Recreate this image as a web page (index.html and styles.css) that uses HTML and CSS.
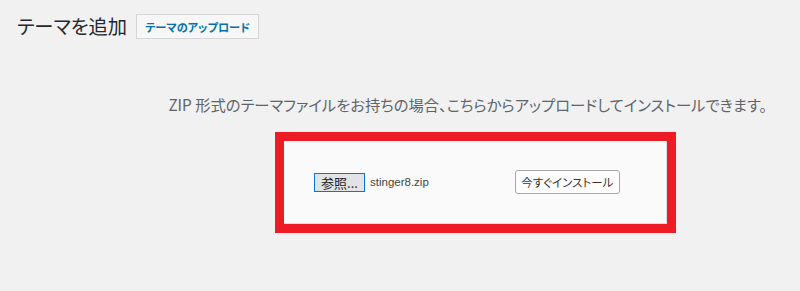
FILE: index.html
```html
<!DOCTYPE html>
<html lang="ja">
<head>
<meta charset="utf-8">
<link rel="stylesheet" href="styles.css">
</head>
<body>
<div class="wrap">
  <div class="title-row">
    <h1 class="title">テーマを追加</h1>
    <span class="title-action">テーマのアップロード</span>
  </div>
  <p class="install-help">ZIP 形式のテーマファイルをお持ちの場合、こちらからアップロードしてインストールできます。</p>
  <div class="highlight">
    <div class="upload-form">
      <span class="browse">参照...</span>
      <span class="file-name">stinger8.zip</span>
      <span class="install-btn">今すぐインストール</span>
    </div>
  </div>
</div>
</body>
</html>
```
FILE: styles.css
```css
html, body {
  margin: 0;
  padding: 0;
  background: #f1f1f1;
}
body {
  width: 800px;
  height: 291px;
  overflow: hidden;
  font-family: "Noto Sans CJK JP", "Noto Sans", sans-serif;
  font-feature-settings: "palt";
}
.wrap {
  padding: 14px 0 0 17px;
}
.title-row {
  display: flex;
  align-items: center;
  gap: 9px;
  height: 25px;
}
.title {
  margin: 0;
  font-size: 19.3px;
  font-weight: 400;
  color: #23282d;
  line-height: 25px;
}
.title-action {
  display: inline-flex;
  align-items: center;
  box-sizing: border-box;
  height: 25px;
  padding: 0 8px;
  border: 1px solid #d5d5d5;
  background: #f7f7f7;
  color: #0073aa;
  font-size: 11.2px;
  font-weight: 700;
}
.install-help {
  margin: 55px 0 0 0;
  padding-right: 33px;
  text-align: right;
  font-size: 15.3px;
  line-height: 20px;
  color: #60646a;
}
.highlight {
  margin: 18px 0 0 258px;
  width: 383px;
  border: 9px solid #ed1c24;
  background: #ececec;
}
.upload-form {
  box-sizing: border-box;
  height: 83px;
  background: #fafafa;
  border-right: 1px solid #dcdcdc;
  border-bottom: 1px solid #dcdcdc;
  display: flex;
  align-items: center;
  padding: 0 0 0 30px;
}
.browse {
  box-sizing: border-box;
  height: 19px;
  width: 51px;
  display: inline-flex;
  align-items: center;
  justify-content: center;
  border: 1px solid #0078d7;
  background: #e1e3e6;
  color: #222;
  font-size: 13px;
}
.file-name {
  margin-left: 5px;
  font-family: "Liberation Sans", sans-serif;
  font-size: 11.5px;
  color: #444;
}
.install-btn {
  margin-left: 86px;
  box-sizing: border-box;
  height: 24px;
  width: 105px;
  display: inline-flex;
  align-items: center;
  justify-content: center;
  border: 1px solid #a8a8a8;
  border-radius: 3px;
  background: #fdfdfd;
  color: #333;
  font-size: 11.5px;
}
```
